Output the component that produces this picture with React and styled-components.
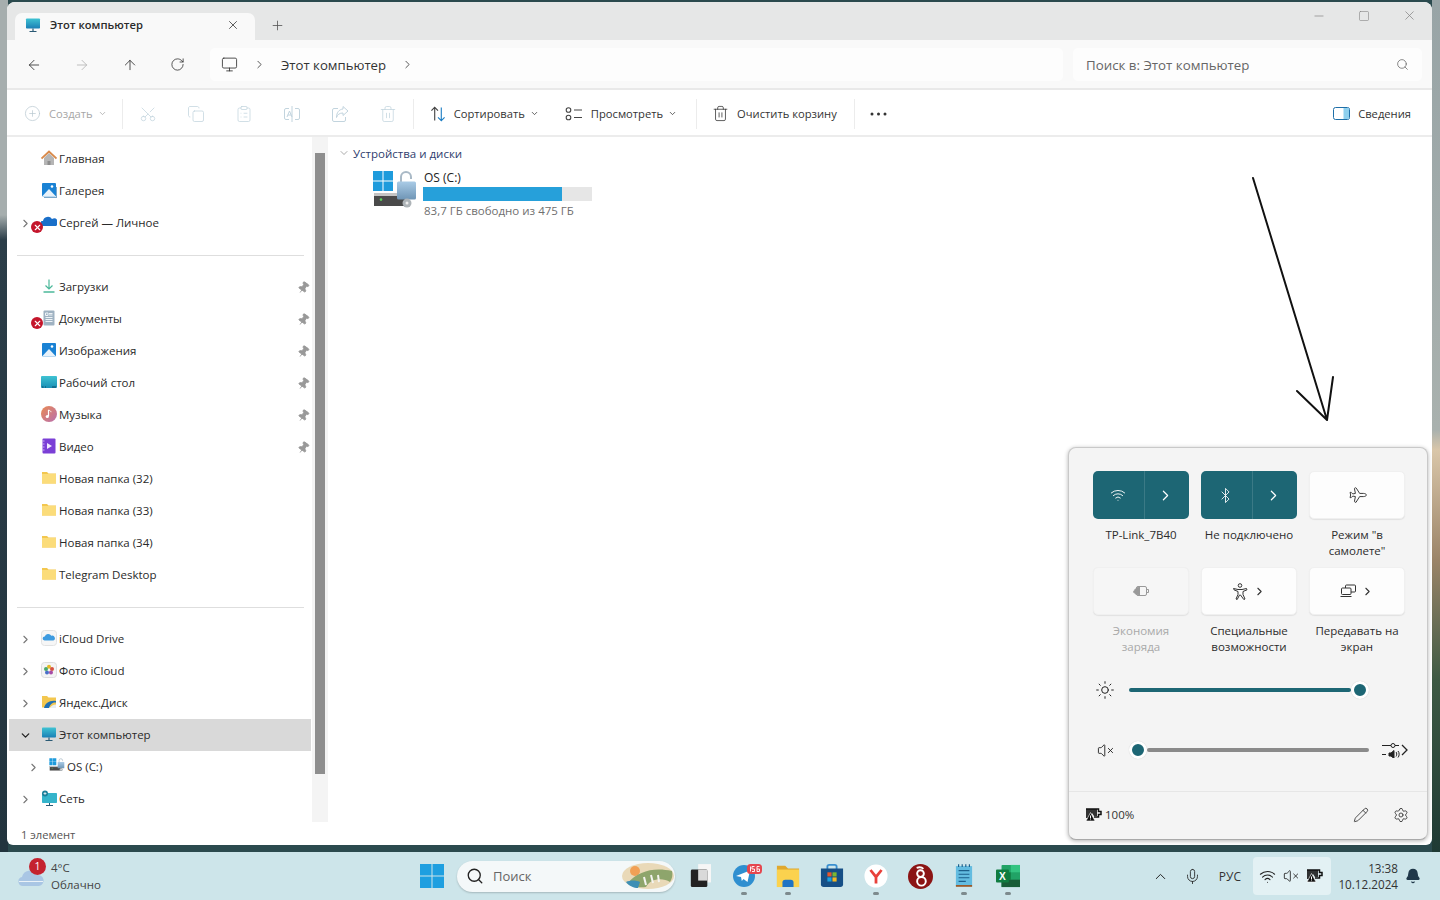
import React from "react";
import styled, { createGlobalStyle } from "styled-components";
import {
  ArrowLeft, ArrowRight, ArrowUp, RotateCw, Monitor, ChevronRight, ChevronDown, ChevronUp, Search, CirclePlus,
  Scissors, Copy, ClipboardList, Trash2, X, Plus, Minus, Square, Pin, Wifi, Bluetooth, Plane,
  Sun, VolumeX, Pencil, Settings, Mic, Bell,
} from "lucide-react";

const GlobalStyle = createGlobalStyle`
  html, body { margin: 0; padding: 0; }
  body { font-family: "Open Sans", "Noto Sans", sans-serif; color: #222; }
  * { box-sizing: border-box; }
`;

const Desktop = styled.div`
  width: 1440px;
  height: 900px;
  overflow: hidden;
  position: relative;
  display: grid;
  grid-template-rows: 1fr 48px;
  background:
    linear-gradient(#a6aeae 0, #a6aeae 215px, #2b3d48 240px, #22343e 850px) left top / 8px 100% no-repeat,
    linear-gradient(#98a4a6 0, #a9b1ae 430px, #d9c6a9 450px, #9b8468 560px, #3e5a44 680px, #1f3a34 850px) right top / 8px 100% no-repeat,
    #2b4a4e;
`;

const Window = styled.div`
  margin: 2px 8px 7px 7px;
  background: #fff;
  border-radius: 8px 8px 6px 6px;
  display: grid;
  grid-template-rows: 38px 50px 47px 1fr;
  overflow: hidden;
  min-height: 0;
`;

const TabBar = styled.div`
  background: #e6e7e7;
  display: flex;
  align-items: flex-end;
  padding-left: 8px;
`;

const Tab = styled.div`
  width: 240px;
  height: 27px;
  background: #f9f9f9;
  border-radius: 7px 7px 0 0;
  display: flex;
  align-items: center;
  padding: 0 15px 4px 10px;
  font-size: 11.2px;
  font-weight: 600;
  color: #2b2b2b;
  span { margin-left: 9px; flex: 1; }
`;

const NewTab = styled.div`
  margin: 0 0 7px 15px;
  display: flex;
  color: #555;
`;

const WindowControls = styled.div`
  margin-left: auto;
  align-self: flex-start;
  padding: 6px 15px 0 0;
  display: flex;
  align-items: center;
  gap: 32px;
  color: #858585;
`;

const AddressRow = styled.div`
  background: #f9f9f9;
  border-bottom: 2px solid #e9e9e9;
  display: flex;
  align-items: center;
  padding: 1px 9px 0 19px;
`;

const NavButtons = styled.div`
  display: flex;
  gap: 32px;
  color: #333;
  width: 184px;
`;

const AddressBar = styled.div`
  width: 853px;
  height: 33px;
  background: #fdfdfd;
  border-radius: 5px;
  display: flex;
  align-items: center;
  padding-left: 11px;
  font-size: 13.2px;
  color: #333;
  span { display: flex; margin: 0 15px; }
`;

const SearchBox = styled.div`
  width: 349px;
  height: 33px;
  margin-left: 10px;
  background: #fdfdfd;
  border-radius: 5px;
  display: flex;
  align-items: center;
  justify-content: space-between;
  padding: 0 13px;
  font-size: 13.3px;
  color: #666;
`;

const Toolbar = styled.div`
  background: #fff;
  border-bottom: 2px solid #ececec;
  display: flex;
  align-items: center;
  padding: 2px 21px 0 17px;
  font-size: 11.2px;
  color: #333;
`;

const ToolDivider = styled.div`
  width: 1px;
  height: 30px;
  background: #ececec;
  margin: 0 ${(p) => p.$right ?? 16}px 0 ${(p) => p.$left ?? 16}px;
`;

const ToolButton = styled.div`
  display: flex;
  align-items: center;
  gap: 8px;
  color: ${(p) => (p.$off ? "#a6a6a6" : "#333")};
  margin-right: ${(p) => p.$right || 0}px;
  margin-left: ${(p) => (p.$push ? "auto" : "0")};
  white-space: nowrap;
`;

const SmallChevron = styled(ChevronDown)`
  margin-left: -3px;
`;

const ToolIcons = styled.div`
  display: flex;
  gap: 30px;
  color: #c2d4de;
`;

const UprightScissors = styled(Scissors)`
  transform: rotate(-90deg);
`;

const Body = styled.div`
  display: flex;
  min-height: 0;
  position: relative;
`;

const Sidebar = styled.div`
  width: 305px;
  padding: 6px 0 0 2px;
  flex-shrink: 0;
`;

const NavRow = styled.div`
  position: relative;
  height: 32px;
  display: grid;
  grid-template-columns: ${(p) => 30 + (p.$indent || 0)}px 16px 1fr 16px;
  column-gap: 2px;
  align-items: center;
  margin-right: 1px;
  font-size: 11.5px;
  color: #2a2a2a;
  background: ${(p) => (p.$selected ? "#d9d9d9" : "transparent")};
  span { margin-top: -1px; }
`;

const NavChevron = styled.div`
  display: flex;
  justify-content: flex-end;
  padding-right: 9px;
  margin-right: -2px;
  color: ${(p) => (p.$open ? "#222" : "#777")};
`;

const NavIcon = styled.div`
  width: 16px;
  height: 16px;
  display: flex;
  margin-top: -2px;
`;

const PinMark = styled.div`
  display: flex;
  justify-content: center;
  color: #999;
  transform: rotate(35deg);
`;

const ErrorBadge = styled.div`
  position: absolute;
  left: 22px;
  top: 14px;
  width: 12px;
  height: 12px;
  border-radius: 50%;
  background: #c4152b;
  color: #fff;
  display: flex;
  align-items: center;
  justify-content: center;
`;

const NavDivider = styled.div`
  height: 32px;
  display: flex;
  align-items: center;
  padding: 0 8px;
  &::after {
    content: "";
    flex: 1;
    height: 1px;
    background: #dedede;
  }
`;

const ScrollTrack = styled.div`
  width: 16px;
  height: 685px;
  background: #f4f4f4;
  padding: 16px 3px 0;
  flex-shrink: 0;
`;

const ScrollThumb = styled.div`
  height: 621px;
  background: #8e8e8e;
`;

const Content = styled.div`
  flex: 1;
  padding: 8px 0 0 10px;
`;

const GroupHeader = styled.div`
  display: flex;
  align-items: center;
  gap: 3px;
  font-size: 11.5px;
  color: #2f3d6e;
  height: 16px;
`;

const DriveTile = styled.div`
  display: grid;
  grid-template-columns: 46px 169px;
  column-gap: 5px;
  margin: 9px 0 0 34px;
`;

const DriveName = styled.div`
  font-size: 12px;
  line-height: 15px;
  padding-left: 1px;
  color: #222;
`;

const DriveBar = styled.div`
  height: 14px;
  background: #e6e6e6;
  margin: 2px 0 3px;
`;

const DriveFill = styled.div`
  height: 100%;
  background: #26a0da;
`;

const DriveFree = styled.div`
  font-size: 11.5px;
  line-height: 14px;
  padding-left: 1px;
  color: #6f6f6f;
  white-space: nowrap;
`;

const StatusText = styled.div`
  position: absolute;
  left: 14px;
  bottom: 3px;
  font-size: 11.2px;
  color: #555;
`;

const Arrow = styled.svg`
  position: absolute;
  left: 1240px;
  top: 170px;
`;

const QuickPanel = styled.div`
  position: absolute;
  left: 1068px;
  top: 447px;
  width: 360px;
  height: 393px;
  background: #f4f4f4;
  border: 1px solid #c9c9c9;
  border-bottom-color: #a9a9a9;
  border-radius: 8px;
  box-shadow: 0 1px 4px rgba(0, 0, 0, 0.3);
  padding-top: 23px;
  display: flex;
  flex-direction: column;
`;

const TileGrid = styled.div`
  display: grid;
  grid-template-columns: repeat(3, 96px);
  column-gap: 12px;
  row-gap: 8px;
  padding-left: 24px;
`;

const TileCell = styled.div`
  text-align: center;
  font-size: 11.5px;
  line-height: 16px;
  color: ${(p) => (p.$off ? "#a9a9a9" : "#2c2c2c")};
`;

const Tile = styled.div`
  height: 48px;
  margin-bottom: 8px;
  border-radius: 5px;
  display: flex;
  align-items: center;
  justify-content: center;
  gap: 5px;
  background: ${(p) => (p.$active ? "#1d6674" : p.$off ? "#f6f6f6" : "#fdfdfd")};
  color: ${(p) => (p.$active ? "#fff" : p.$off ? "#a5a5a5" : "#333")};
  border: ${(p) => (p.$active ? "none" : "1px solid #f0f0f0")};
  box-shadow: ${(p) => (p.$active ? "none" : "0 1px 1px #e2e2e2")};
`;

const TileHalf = styled.div`
  flex: 1;
  height: 100%;
  display: flex;
  align-items: center;
  justify-content: center;
  &:first-child { padding-left: 4px; }
  & + & {
    border-left: 1px solid #3b7a86;
    padding-right: 3px;
  }
`;

const SidePlane = styled(Plane)`
  transform: rotate(45deg);
`;

const Sliders = styled.div`
  margin-top: 19px;
  display: flex;
  flex-direction: column;
  gap: 28px;
  padding-left: 24px;
`;

const SliderRow = styled.div`
  height: 32px;
  display: flex;
  align-items: center;
`;

const SliderIcon = styled.div`
  width: 24px;
  margin-right: 12px;
  display: flex;
  justify-content: center;
  color: #222;
`;

const Track = styled.div`
  width: 240px;
  display: flex;
  align-items: center;
`;

const TrackBar = styled.div`
  flex: 1;
  height: 4px;
  border-radius: 2px;
  background: ${(p) => p.$color};
`;

const Thumb = styled.div`
  width: 18px;
  height: 18px;
  border-radius: 50%;
  background: #1d6674;
  border: 3.5px solid #fff;
  box-shadow: 0 0 1px rgba(0, 0, 0, 0.2);
`;

const MixerSlot = styled.div`
  display: flex;
  margin-left: 12px;
`;

const PanelFooter = styled.div`
  margin-top: auto;
  height: 48px;
  border-top: 1px solid #e6e6e6;
  display: flex;
  align-items: center;
  padding: 0 18px 2px 16px;
  font-size: 11.5px;
  color: #333;
  gap: 3px;
`;

const FooterIcons = styled.div`
  margin-left: auto;
  display: flex;
  gap: 24px;
  color: #333;
`;

const Taskbar = styled.div`
  background: #cde5ea;
  display: grid;
  grid-template-columns: 402px auto 1fr auto;
  align-items: center;
  padding-left: 18px;
`;

const Weather = styled.div`
  position: relative;
  display: flex;
  align-items: center;
  gap: 7px;
  font-size: 11.5px;
  line-height: 17px;
  color: #444;
`;

const Count = styled.div`
  position: absolute;
  left: 11px;
  top: -1px;
  width: 17px;
  height: 17px;
  border-radius: 50%;
  background: #c4222f;
  color: #fff;
  font-size: 10.5px;
  line-height: 17px;
  text-align: center;
`;

const TaskIcons = styled.div`
  display: flex;
  align-items: center;
`;

const SearchPill = styled.div`
  width: 218px;
  height: 31px;
  margin: 0 3px 0 13px;
  border-radius: 16px;
  background: #f4f8f9;
  box-shadow: 0 1px 2px rgba(0, 0, 0, 0.2);
  display: flex;
  align-items: center;
  padding: 0 1px 0 9px;
  gap: 9px;
  font-size: 13px;
  color: #666;
  svg:last-child { margin-left: auto; }
`;

const TaskSlot = styled.div`
  position: relative;
  width: 44px;
  height: 48px;
  display: flex;
  align-items: center;
  justify-content: center;
  &::after {
    content: ${(p) => (p.$running ? '""' : "none")};
    position: absolute;
    bottom: 5px;
    left: 19px;
    width: 6px;
    height: 3px;
    border-radius: 2px;
    background: #7d8a8d;
  }
`;

const Tray = styled.div`
  grid-column: 4;
  display: flex;
  align-items: center;
  color: #222;
  padding-right: 19px;
`;

const TrayIcon = styled.div`
  display: flex;
  width: 32px;
  justify-content: center;
`;

const Lang = styled.div`
  font-size: 12px;
  color: #333;
  margin: 0 12px 0 10px;
`;

const TrayGroup = styled.div`
  width: 78px;
  height: 38px;
  border-radius: 4px;
  background: #e3f1f4;
  display: flex;
  align-items: center;
  justify-content: space-between;
  padding: 0 8px 0 6px;
`;

const Clock = styled.div`
  width: 67px;
  text-align: right;
  font-size: 11.7px;
  line-height: 16px;
  color: #333;
  white-space: nowrap;
`;

const BellWrap = styled.div`
  display: flex;
  margin-left: 7px;
  color: #20384a;
`;

/* colour icons */
const HomeIcon = () => (
  <svg width="16" height="16" viewBox="0 0 16 16">
    <path d="M3 8v7h10V8L8 3z" fill="#b5b5b5" />
    <path d="M6.500 15v-4h3v4z" fill="#8d8d8d" />
    <path d="M.5 8.500 8 1.500l7.500 7" fill="none" stroke="#d98a4b" strokeWidth="1.800" />
  </svg>
);
const PicIcon = ({ stack }) => (
  <svg width="16" height="16" viewBox="0 0 16 16">
    {stack && <path d="M3 15h12V5h1v11H3z" fill="#7aa7c9" />}
    <rect x="1" y="1" width="14" height="13.500" rx="1" fill="#1a82d4" />
    <path d="M1 14.500 8 7l7 7.500z" fill="#e8f2fa" />
    <circle cx="11" cy="4.500" r="1.300" fill="#fff" />
  </svg>
);
const CloudIcon = () => (
  <svg width="16" height="16" viewBox="0 0 16 16">
    <path d="M1 12a2.500 2.500 0 0 1 1-5 5 5 0 0 1 9-2 3.500 3.500 0 0 1 4 7z" fill="#1a6fc9" />
  </svg>
);
const DownloadIcon = () => (
  <svg width="16" height="16" viewBox="0 0 16 16" fill="none" stroke="#4bb89a" strokeWidth="1.200">
    <path d="M8 1.500v9.500M4.500 7.500 8 11l3.500-3.500" />
    <path d="M2.500 14h11" strokeWidth="1.500" />
  </svg>
);
const DocIcon = () => (
  <svg width="16" height="16" viewBox="0 0 16 16">
    <rect x="2.500" y="0.500" width="11" height="15" rx="1" fill="#9fb2c2" />
    <path d="M4.500 3h2.500v2.500H4.500zM8 3.500h3.500M8 5h3.500M4.500 7.500h7M4.500 9.500h7M4.500 11.500h7" stroke="#eef3f7" fill="none" />
  </svg>
);
const DesktopIcon = () => (
  <svg width="16" height="16" viewBox="0 0 16 16">
    <defs>
      <linearGradient id="desk" x1="0" y1="0" x2="0" y2="1"><stop offset="0" stopColor="#3fc3d3" /><stop offset="1" stopColor="#1a8fb5" /></linearGradient>
    </defs>
    <rect x="0" y="2" width="16" height="12" rx="1" fill="url(#desk)" />
    <path d="M1 13h1.500M4 13h1M11 13h4" stroke="#0c4a66" />
  </svg>
);
const MusicIcon = () => (
  <svg width="16" height="16" viewBox="0 0 16 16">
    <defs>
      <linearGradient id="mus" x1="0" y1="0" x2="1" y2="1"><stop offset="0" stopColor="#ea8a52" /><stop offset="1" stopColor="#b86fb0" /></linearGradient>
    </defs>
    <circle cx="8" cy="8" r="8" fill="url(#mus)" />
    <path d="M7.500 4v6" stroke="#fff" strokeWidth="1.200" />
    <path d="M7.500 4c1 .3 2.500 1 2.500 2.200" stroke="#fff" fill="none" />
    <circle cx="6.300" cy="10.500" r="1.600" fill="#fff" />
  </svg>
);
const VideoIcon = () => (
  <svg width="16" height="16" viewBox="0 0 16 16">
    <rect x="1.500" y="0.500" width="13" height="15" rx="1" fill="#7b3fd6" />
    <path d="M1.500 3h2M1.500 6h2M1.500 9h2M1.500 12h2" stroke="#cdb3f2" />
    <path d="M6 5l5 3-5 3z" fill="#f0e8ff" />
  </svg>
);
const FolderIcon = () => (
  <svg width="16" height="16" viewBox="0 0 16 16">
    <path d="M1 2h5l1.500 1.500H15V13.500H1z" fill="#f3c74f" />
    <rect x="1" y="4" width="14" height="9.500" fill="#fbdc7a" />
  </svg>
);
const PhotosIcon = () => (
  <svg width="16" height="16" viewBox="0 0 16 16">
    <rect x="0.500" y="0.500" width="15" height="15" rx="3" fill="#f4f4f4" stroke="#ddd" />
    <circle cx="8" cy="4.800" r="2" fill="#e8b923" />
    <circle cx="11" cy="7" r="2" fill="#d6523f" />
    <circle cx="10" cy="10.500" r="2" fill="#a64ca6" />
    <circle cx="6" cy="10.500" r="2" fill="#4a6fc9" />
    <circle cx="5" cy="7" r="2" fill="#4ba86b" />
  </svg>
);
const ICloudIcon = () => (
  <svg width="16" height="16" viewBox="0 0 16 16">
    <rect x="0.500" y="0.500" width="15" height="15" rx="3" fill="#f6f6f6" stroke="#e2e2e2" />
    <path d="M3.500 10.500a2 2 0 0 1 .3-4 3.500 3.500 0 0 1 6.500-.7 2.400 2.400 0 0 1 2 4.700z" fill="#3d9be0" />
  </svg>
);
const YaDiskIcon = () => (
  <svg width="16" height="16" viewBox="0 0 16 16">
    <path d="M1 2h5l1.500 1.500H15V13.500H1z" fill="#f3c74f" />
    <path d="M3 14c1-5 6-8 12-7v1.500C11 8 9 11 8 14z" fill="#1f6fb5" />
    <path d="M9 14c1-2 3-3.500 6-3.500V14z" fill="#e8eef2" />
  </svg>
);
const PcIcon = () => (
  <svg width="16" height="16" viewBox="0 0 16 16">
    <defs>
      <linearGradient id="pc" x1="0" y1="0" x2="0" y2="1"><stop offset="0" stopColor="#3fc3d3" /><stop offset="1" stopColor="#1a7fb5" /></linearGradient>
    </defs>
    <rect x="1" y="1.500" width="14" height="10" rx="0.800" fill="url(#pc)" />
    <path d="M8 11.500v2.500M4.500 14.500h7" stroke="#2a5a75" strokeWidth="1.200" />
  </svg>
);
const NetworkIcon = () => (
  <svg width="16" height="16" viewBox="0 0 16 16">
    <rect x="1" y="3" width="15" height="10" rx="0.800" fill="#35b4cb" />
    <path d="M8.500 13v2M5 15.500h7" stroke="#2a5a75" />
    <circle cx="4" cy="3.500" r="3" fill="#1c7f9a" />
    <path d="M2.500 3.500h3M4 2v3" stroke="#fff" strokeWidth="0.700" />
  </svg>
);
const DriveIcon = ({ size = 46 }) => (
  <svg width={size} height={size * 0.83} viewBox="0 0 46 38">
    <defs>
      <linearGradient id="lock" x1="0" y1="0" x2="0" y2="1"><stop offset="0" stopColor="#a9cbe6" /><stop offset="1" stopColor="#6f95b5" /></linearGradient>
    </defs>
    <path d="M1 1h9.500v9.500H1zM11.500 1H21v9.500h-9.500zM1 11.500h9.500V21H1zM11.500 11.500H21V21h-9.500z" fill="#1e9bdc" />
    <path d="M2 23h34v13H2z" fill="#4a4a4a" />
    <path d="M2 23h34v3H2z" fill="#c4c4c4" />
    <circle cx="9" cy="29.500" r="1.300" fill="#5bd45b" />
    <path d="M29 12V7a5 5 0 0 1 10 0v2" fill="none" stroke="#a9b9c6" strokeWidth="2" />
    <rect x="25" y="11.500" width="19" height="18" rx="1.500" fill="url(#lock)" />
    <circle cx="35" cy="33" r="4.500" fill="#aeb4b8" />
    <circle cx="35" cy="33" r="1.500" fill="#eee" />
  </svg>
);
const WinLogo = () => (
  <svg width="24" height="24" viewBox="0 0 24 24">
    <path d="M0 0h11.500v11.500H0zM12.500 0H24v11.500H12.500zM0 12.500h11.500V24H0zM12.500 12.500H24V24H12.500z" fill="#1e9fe0" />
  </svg>
);
const BatteryWarn = () => (
  <svg width="17" height="14" viewBox="0 0 17 14">
    <path d="M1 1h12.500v2.500H16v3h-2.500V9H9" fill="none" stroke="#111" strokeWidth="1.500" />
    <path d="M1 1h11v7H9L7 5 4 10H1z" fill="#111" opacity=".85" />
    <path d="M5.500 4.500 1 13h9z" fill="#111" stroke="#fff" strokeWidth=".6" />
    <path d="M5.500 7.500v3M5.500 11.500v.6" stroke="#fff" />
  </svg>
);
const CastIcon = () => (
  <svg width="16" height="14" viewBox="0 0 16 14" fill="none" stroke="#333">
    <rect x="5.500" y="1" width="10" height="7" rx="1" />
    <rect x="1.500" y="4" width="9.500" height="6.500" rx="1" fill="#fdfdfd" />
    <path d="M.5 12.500h11" />
  </svg>
);
const SaverIcon = () => (
  <svg width="16" height="12" viewBox="0 0 16 12" fill="none" stroke="#999">
    <rect x="3.500" y="1.500" width="10" height="9" rx="1.500" />
    <path d="M14 4.500h1.500v3H14" />
    <path d="M.5 7c2-4 4-5 6-5v8C4 10 2 9 .5 7z" fill="#999" />
  </svg>
);
const PersonIcon = () => (
  <svg width="16" height="17" viewBox="0 0 16 17" fill="none" stroke="#333" strokeLinejoin="round">
    <circle cx="8" cy="2.500" r="1.800" />
    <path d="M1.500 5.500 6 6.500h4l4.500-1 .5 1.300-4 1.700v3l2 4.500-1.200.5L8.500 12h-1l-2.300 4.500L4 16l2-4.500v-3L2 6.800z" />
  </svg>
);
const MixerIcon = () => (
  <svg width="27" height="16" viewBox="0 0 27 16" fill="none" stroke="#222">
    <path d="M1 3.500h9M14 3.500h4M1 12.500h4" />
    <circle cx="12" cy="3.500" r="2" />
    <path d="M8 11h2l3-2.500v8L10 14H8z" fill="#222" />
    <path d="M15 10c1 1 1 3 0 4.500M17 9c1.500 1.500 1.500 5 0 6.500" />
    <path d="m21 3 5 5-5 5" strokeWidth="1.300" />
  </svg>
);
const WeatherCloud = () => (
  <svg width="26" height="24" viewBox="0 0 26 24">
    <path d="M5 22a4.500 4.500 0 0 1-1-8.900A8 8 0 0 1 19 11a5.500 5.500 0 0 1 2 11z" fill="#a9c6e4" />
    <path d="M1 17h24v1H1z" fill="#eaf2f8" />
  </svg>
);
const HillsThumb = () => (
  <svg width="52" height="26" viewBox="0 0 52 26">
    <ellipse cx="26" cy="13" rx="26" ry="13" fill="#e9d9b8" />
    <circle cx="13" cy="8" r="5" fill="#f1a055" />
    <path d="M6 20c10-12 26-16 44-12 1 4 0 8-2 11-8-5-20-3-24 5-6 1-14 0-18-4z" fill="#8ea56c" />
    <path d="M4 19c4-2 10-2 14 0l-2 6c-4 0-9-2-12-6z" fill="#3d8fb5" />
    <path d="M22 14l2 8M29 12l2 8M36 12l1 7" stroke="#f4f4f0" strokeWidth="2" />
  </svg>
);
const WidgetsIcon = () => (
  <svg width="22" height="24" viewBox="0 0 24 26">
    <rect x="10" y="0" width="14" height="20" fill="#f6f6f6" />
    <rect x="2" y="6" width="18" height="19" rx="1.500" fill="#222" />
    <rect x="10" y="6" width="10" height="12" fill="#d9d9d9" />
  </svg>
);
const TelegramIcon = () => (
  <svg width="36" height="32" viewBox="0 0 36 32">
    <circle cx="18" cy="16" r="11" fill="#2f8fd0" />
    <path d="M10 16l14-5.500-2.500 11.500-4-3-1.700 2-.8-4z" fill="#fff" />
    <rect x="21" y="4" width="15" height="10" rx="3.500" fill="#e5474f" />
    <path d="M24.500 6.500v5M28.500 6.500h-2.500v2.500h2.500v2.500h-2.500M33.500 6.500H31v5h2.500V9H31" stroke="#fff" strokeWidth=".9" fill="none" />
  </svg>
);
const ExplorerIcon = () => (
  <svg width="24" height="24" viewBox="0 0 26 26">
    <path d="M1 2h9l3 3h12v20H1z" fill="#e0a82e" />
    <rect x="1" y="6" width="24" height="19" fill="#fbd24e" />
    <path d="M7 25v-5a3 3 0 0 1 3-3h6a3 3 0 0 1 3 3v5z" fill="#1f74c4" />
  </svg>
);
const StoreIcon = () => (
  <svg width="24" height="24" viewBox="0 0 26 26">
    <path d="M8 6V3a2 2 0 0 1 2-2h6a2 2 0 0 1 2 2v3" fill="none" stroke="#3a8fd0" strokeWidth="2" />
    <path d="M1 5h24v17a3 3 0 0 1-3 3H4a3 3 0 0 1-3-3z" fill="#164f86" />
    <path d="M8 9h4.500v4.500H8z" fill="#e8562a" />
    <path d="M13.500 9H18v4.500h-4.500z" fill="#7cb82f" />
    <path d="M8 14.500h4.500V19H8z" fill="#1da1e0" />
    <path d="M13.500 14.500H18V19h-4.500z" fill="#f4b823" />
  </svg>
);
const YandexIcon = () => (
  <svg width="24" height="24" viewBox="0 0 26 26">
    <circle cx="13" cy="13" r="12.500" fill="#fff" />
    <path d="M7 6.500 13 14l6-7.500M13 14v7" fill="none" stroke="#e8403a" strokeWidth="3" />
  </svg>
);
const EightIcon = () => (
  <svg width="25" height="25" viewBox="0 0 26 26" fill="none" stroke="#fff" strokeWidth="2">
    <circle cx="13" cy="13" r="13" fill="#8b1414" stroke="none" />
    <circle cx="13" cy="10" r="3.500" />
    <circle cx="14" cy="18" r="4.500" />
    <path d="M9 4c3-1 6 0 7 1" />
  </svg>
);
const NotesIcon = () => (
  <svg width="18" height="24" viewBox="0 0 20 26">
    <rect x="1" y="2" width="18" height="22" fill="#63bce0" />
    <rect x="1" y="23" width="18" height="2" fill="#9a5a2a" />
    <path d="M4 7h12M4 11h12M4 15h12M4 19h8" stroke="#1d5f8a" strokeWidth="1.200" />
    <path d="M4 0v3M8 0v3M12 0v3M16 0v3" stroke="#1d5f8a" strokeWidth="1.300" />
  </svg>
);
const ExcelIcon = () => (
  <svg width="24" height="24" viewBox="0 0 26 26">
    <rect x="6" y="1" width="20" height="24" rx="1" fill="#21a366" />
    <rect x="16" y="1" width="10" height="8" fill="#33c481" />
    <rect x="6" y="9" width="10" height="8" fill="#107c41" />
    <rect x="6" y="17" width="20" height="8" fill="#185c37" />
    <rect x="0" y="6" width="14" height="14" rx="1" fill="#107c41" />
    <text x="3.300" y="17" fontSize="11" fontWeight="700" fill="#fff" fontFamily="Liberation Sans, sans-serif">X</text>
  </svg>
);
const RenameIcon = () => (
  <svg width="18" height="18" viewBox="0 0 18 18" fill="none" stroke="currentColor">
    <path d="M6 3.500H3a1.500 1.500 0 0 0-1.500 1.500v8A1.500 1.500 0 0 0 3 14.500h3M12 3.500h3A1.500 1.500 0 0 1 16.500 5v8a1.500 1.500 0 0 1-1.500 1.500h-3M9 1v16" />
    <path d="m4 12 2.500-6L9 12M4.800 10h3.400" />
  </svg>
);
const ShareIcon = () => (
  <svg width="18" height="18" viewBox="0 0 18 18" fill="none" stroke="currentColor">
    <path d="M7 3.500H3A1.500 1.500 0 0 0 1.500 5v10A1.500 1.500 0 0 0 3 16.500h10a1.500 1.500 0 0 0 1.500-1.500v-3" />
    <path d="M12 1.500 17 6l-5 4.500V8C8.500 8 6.500 9.500 5.500 12.500c0-5 2.500-8 6.500-8.500z" />
  </svg>
);

const groups = [
  [
    { label: "Главная", icon: <HomeIcon /> },
    { label: "Галерея", icon: <PicIcon stack /> },
    { label: "Сергей — Личное", icon: <CloudIcon />, chevron: true, error: true },
  ],
  [
    { label: "Загрузки", icon: <DownloadIcon />, pin: true },
    { label: "Документы", icon: <DocIcon />, pin: true, error: true },
    { label: "Изображения", icon: <PicIcon />, pin: true },
    { label: "Рабочий стол", icon: <DesktopIcon />, pin: true },
    { label: "Музыка", icon: <MusicIcon />, pin: true },
    { label: "Видео", icon: <VideoIcon />, pin: true },
    { label: "Новая папка (32)", icon: <FolderIcon /> },
    { label: "Новая папка (33)", icon: <FolderIcon /> },
    { label: "Новая папка (34)", icon: <FolderIcon /> },
    { label: "Telegram Desktop", icon: <FolderIcon /> },
  ],
  [
    { label: "iCloud Drive", icon: <ICloudIcon />, chevron: true },
    { label: "Фото iCloud", icon: <PhotosIcon />, chevron: true },
    { label: "Яндекс.Диск", icon: <YaDiskIcon />, chevron: true },
    { label: "Этот компьютер", icon: <PcIcon />, open: true, selected: true },
    { label: "OS (C:)", icon: <DriveIcon size={16} />, chevron: true, indent: 8 },
    { label: "Сеть", icon: <NetworkIcon />, chevron: true },
  ],
];

const tiles = [
  { label: "TP-Link_7B40", active: true, icon: <Wifi size={16} strokeWidth={1.4} /> },
  { label: "Не подключено", active: true, icon: <Bluetooth size={17} strokeWidth={1.2} /> },
  { label: 'Режим "в самолете"', icon: <SidePlane size={18} strokeWidth={1.2} /> },
  { label: "Экономия заряда", off: true, icon: <SaverIcon /> },
  { label: "Специальные возможности", icon: <PersonIcon />, more: true },
  { label: "Передавать на экран", icon: <CastIcon />, more: true },
];

const taskApps = [
  { icon: <WidgetsIcon /> },
  { icon: <TelegramIcon />, running: true },
  { icon: <ExplorerIcon />, running: true },
  { icon: <StoreIcon /> },
  { icon: <YandexIcon />, running: true },
  { icon: <EightIcon /> },
  { icon: <NotesIcon />, running: true },
  { icon: <ExcelIcon />, running: true },
];

const SideNav = () => (
  <Sidebar>
    {groups.map((rows, i) => (
      <React.Fragment key={i}>
        {i > 0 && <NavDivider />}
        {rows.map((row) => (
          <NavRow key={row.label} $indent={row.indent} $selected={row.selected}>
            <NavChevron $open={row.open}>
              {row.open ? <ChevronDown size={13} strokeWidth={2.4} /> : row.chevron && <ChevronRight size={13} />}
            </NavChevron>
            <NavIcon>{row.icon}</NavIcon>
            <span>{row.label}</span>
            {row.pin && <PinMark><Pin size={13} fill="currentColor" strokeWidth={1.5} /></PinMark>}
            {row.error && (
              <ErrorBadge><X size={9} strokeWidth={3} /></ErrorBadge>
            )}
          </NavRow>
        ))}
      </React.Fragment>
    ))}
  </Sidebar>
);

const QuickSettings = () => (
  <QuickPanel>
    <TileGrid>
      {tiles.map((t) => (
        <TileCell key={t.label} $off={t.off}>
          <Tile $active={t.active} $off={t.off}>
            {t.active ? (
              <>
                <TileHalf>{t.icon}</TileHalf>
                <TileHalf><ChevronRight size={17} strokeWidth={1.7} /></TileHalf>
              </>
            ) : (
              <>
                {t.icon}
                {t.more && <ChevronRight size={13} />}
              </>
            )}
          </Tile>
          {t.label}
        </TileCell>
      ))}
    </TileGrid>
    <Sliders>
      <SliderRow>
        <SliderIcon><Sun size={20} strokeWidth={1.2} /></SliderIcon>
        <Track>
          <TrackBar $color="#1d6674" />
          <Thumb />
        </Track>
      </SliderRow>
      <SliderRow>
        <SliderIcon><VolumeX size={17} strokeWidth={1.3} /></SliderIcon>
        <Track>
          <Thumb />
          <TrackBar $color="#8a8a8a" />
        </Track>
        <MixerSlot><MixerIcon /></MixerSlot>
      </SliderRow>
    </Sliders>
    <PanelFooter>
      <BatteryWarn />
      <span>100%</span>
      <FooterIcons>
        <Pencil size={16} strokeWidth={1.3} />
        <Settings size={16} strokeWidth={1.3} />
      </FooterIcons>
    </PanelFooter>
  </QuickPanel>
);

const App = () => (
  <>
    <GlobalStyle />
    <Desktop>
      <Window>
        <TabBar>
          <Tab>
            <PcIcon />
            <span>Этот компьютер</span>
            <X size={14} strokeWidth={1.3} />
          </Tab>
          <NewTab><Plus size={15} strokeWidth={1.3} /></NewTab>
          <WindowControls>
            <Minus size={14} strokeWidth={1.2} />
            <Square size={12} strokeWidth={1.2} />
            <X size={15} strokeWidth={1.2} />
          </WindowControls>
        </TabBar>
        <AddressRow>
          <NavButtons>
            <ArrowLeft size={16} strokeWidth={1.3} />
            <ArrowRight size={16} strokeWidth={1.3} color="#b5b5b5" />
            <ArrowUp size={16} strokeWidth={1.3} />
            <RotateCw size={15} strokeWidth={1.3} />
          </NavButtons>
          <AddressBar>
            <Monitor size={17} strokeWidth={1.2} />
            <span><ChevronRight size={13} strokeWidth={1.5} /></span>
            Этот компьютер
            <span><ChevronRight size={13} strokeWidth={1.5} /></span>
          </AddressBar>
          <SearchBox>
            Поиск в: Этот компьютер
            <Search size={13} strokeWidth={1.4} />
          </SearchBox>
        </AddressRow>
        <Toolbar>
          <ToolButton $off>
            <CirclePlus size={17} strokeWidth={1} color="#b8c8d0" />
            Создать
            <SmallChevron size={9} />
          </ToolButton>
          <ToolDivider $left={15} />
          <ToolIcons>
            <UprightScissors size={18} strokeWidth={1} />
            <Copy size={18} strokeWidth={1} />
            <ClipboardList size={18} strokeWidth={1} />
            <RenameIcon />
            <ShareIcon />
            <Trash2 size={18} strokeWidth={1} />
          </ToolIcons>
          <ToolDivider />
          <ToolButton $right={26}>
            <svg width="16" height="16" viewBox="0 0 17 16" fill="none" strokeWidth="1.200">
              <path d="M5 15V1M1.500 4.500 5 1l3.500 3.500" stroke="#444" />
              <path d="M12 1v14M8.500 11.500 12 15l3.500-3.500" stroke="#1f7fc4" />
            </svg>
            Сортировать
            <SmallChevron size={9} />
          </ToolButton>
          <ToolButton>
            <svg width="18" height="14" viewBox="0 0 18 14" fill="none" stroke="#444" strokeWidth="1.100">
              <circle cx="3.500" cy="3" r="2.300" />
              <circle cx="3.500" cy="10.500" r="2.300" />
              <path d="M9 3h8M9 10.500h8" />
            </svg>
            Просмотреть
            <SmallChevron size={9} />
          </ToolButton>
          <ToolDivider $left={19} $right={15} />
          <ToolButton>
            <Trash2 size={17} strokeWidth={1.1} />
            Очистить корзину
          </ToolButton>
          <ToolDivider $left={17} $right={15} />
          <ToolButton><svg width="18" height="4" viewBox="0 0 18 4" fill="#333"><circle cx="2" cy="2" r="1.500" /><circle cx="8.500" cy="2" r="1.500" /><circle cx="15" cy="2" r="1.500" /></svg></ToolButton>
          <ToolButton $push>
            <svg width="17" height="13" viewBox="0 0 17 13" fill="none">
              <rect x=".5" y=".5" width="16" height="12" rx="2" stroke="#1f6fa8" />
              <rect x="10.500" y="1" width="5.500" height="11" fill="#8fd0ee" />
            </svg>
            Сведения
          </ToolButton>
        </Toolbar>
        <Body>
          <SideNav />
          <ScrollTrack><ScrollThumb /></ScrollTrack>
          <Content>
            <GroupHeader>
              <ChevronDown size={12} strokeWidth={1} color="#555" />
              Устройства и диски
            </GroupHeader>
            <DriveTile>
              <DriveIcon />
              <div>
                <DriveName>OS (C:)</DriveName>
                <DriveBar><DriveFill style={{ width: `${(1 - 83.7 / 475) * 100}%` }} /></DriveBar>
                <DriveFree>83,7 ГБ свободно из 475 ГБ</DriveFree>
              </div>
            </DriveTile>
          </Content>
          <StatusText>1 элемент</StatusText>
        </Body>
      </Window>
      <Taskbar>
        <Weather>
          <WeatherCloud />
          <Count>1</Count>
          <div>4°C<br />Облачно</div>
        </Weather>
        <TaskIcons>
          <WinLogo />
          <SearchPill>
            <Search size={18} strokeWidth={1.8} color="#222" />
            Поиск
            <HillsThumb />
          </SearchPill>
          {taskApps.map((app, i) => (
            <TaskSlot key={i} $running={app.running}>{app.icon}</TaskSlot>
          ))}
        </TaskIcons>
        <Tray>
          <TrayIcon><ChevronUp size={17} strokeWidth={1.4} /></TrayIcon>
          <TrayIcon><Mic size={17} strokeWidth={1.2} /></TrayIcon>
          <Lang>РУС</Lang>
          <TrayGroup>
            <Wifi size={17} strokeWidth={1.5} />
            <VolumeX size={16} strokeWidth={1.3} />
            <BatteryWarn />
          </TrayGroup>
          <Clock>13:38<br />10.12.2024</Clock>
          <BellWrap><Bell size={16} fill="currentColor" /></BellWrap>
        </Tray>
      </Taskbar>
      <QuickSettings />
      <Arrow width="100" height="260" viewBox="0 0 100 260" fill="none" stroke="#111" strokeWidth="2" strokeLinecap="round">
        <path d="M13 8 87 250M57 221l30 29M93 207l-6 43" />
      </Arrow>
    </Desktop>
  </>
);

export default App;
